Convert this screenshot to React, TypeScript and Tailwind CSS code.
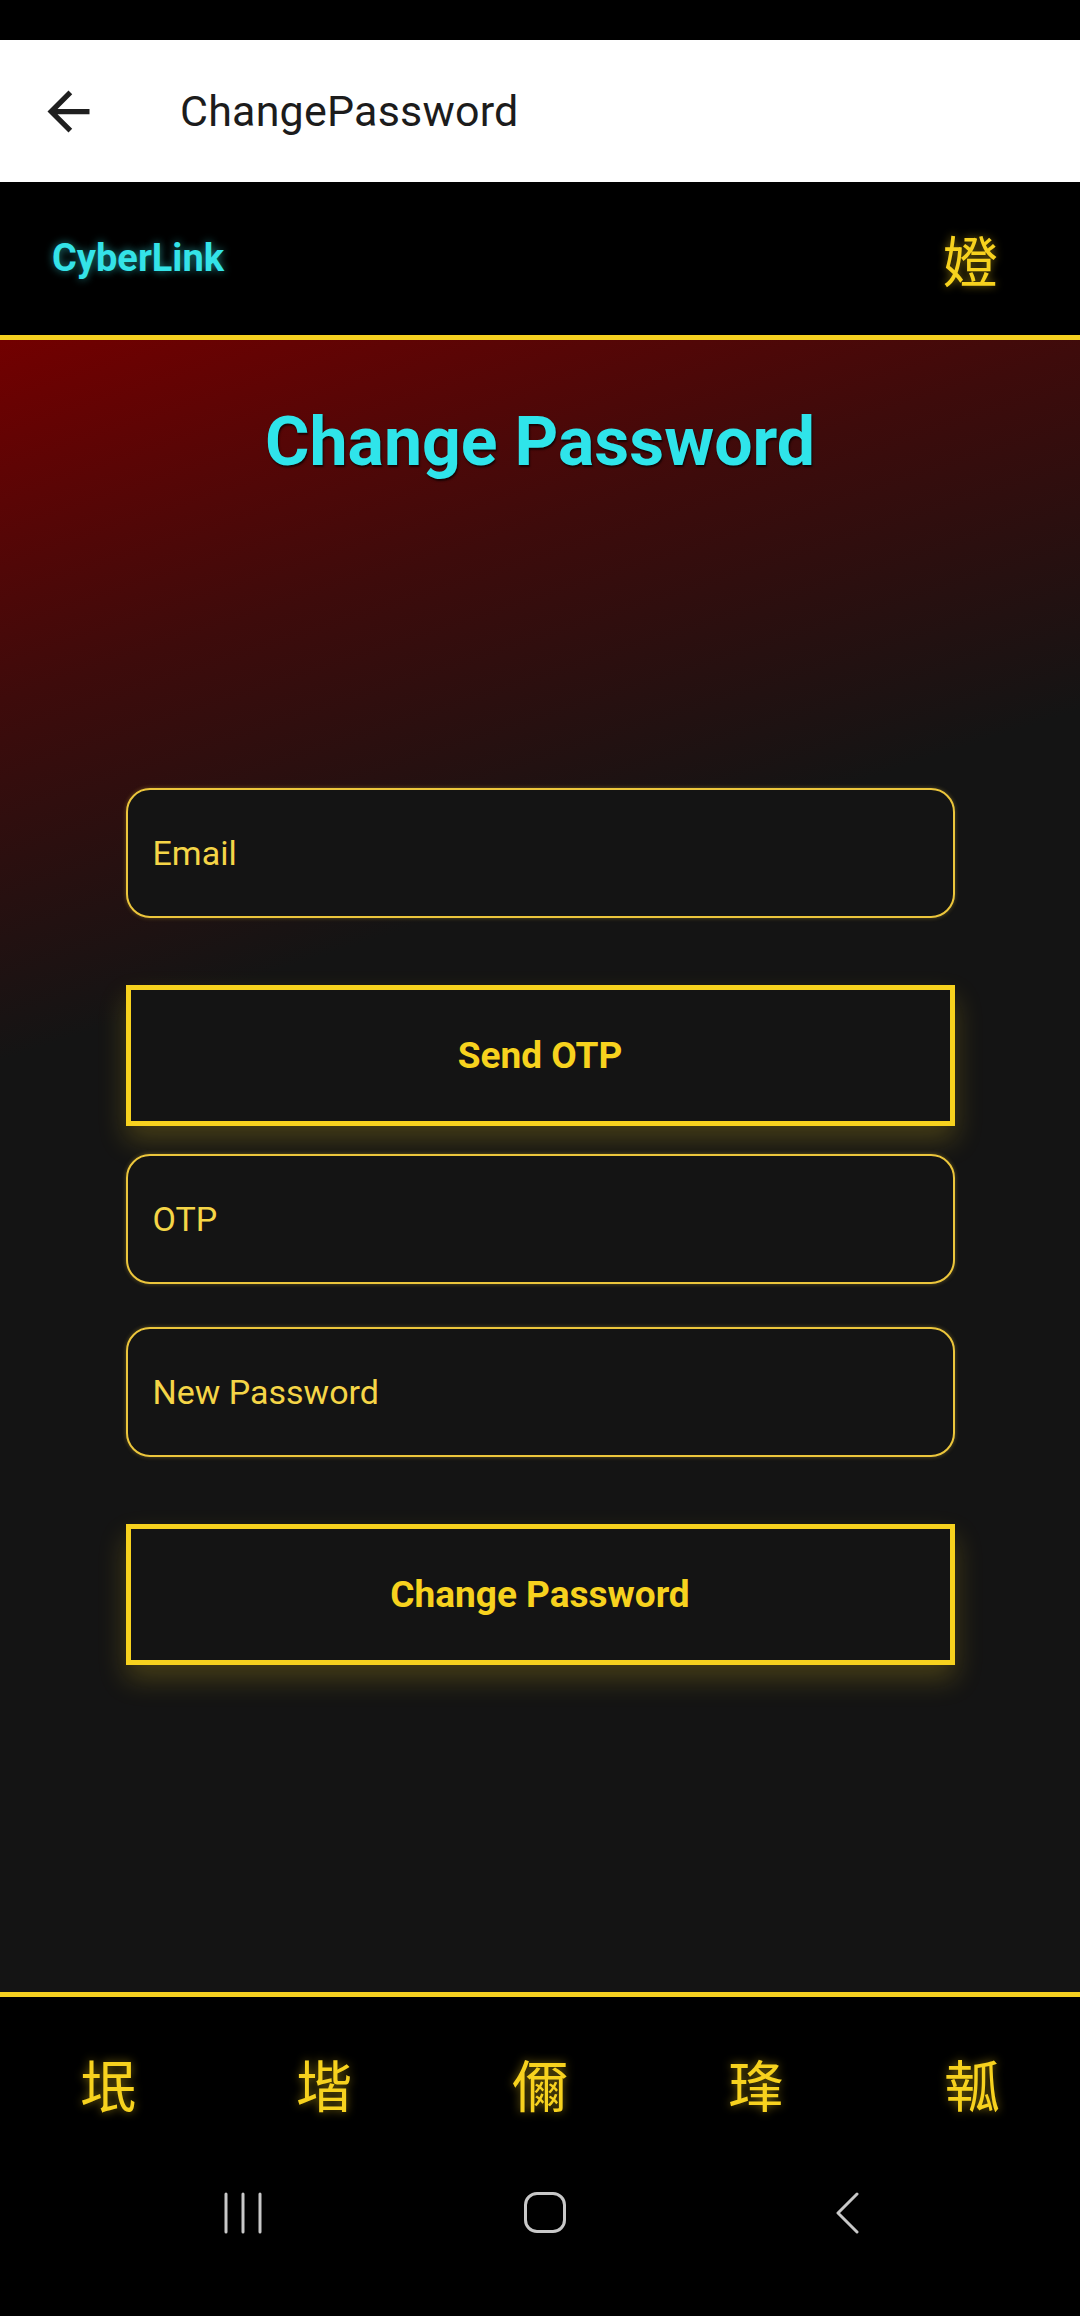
import { useState } from 'react';

const tabs = ['垊', '堦', '儞', '琒', '瓡'];

function Field({ placeholder }: { placeholder: string }) {
  const [value, setValue] = useState('');
  return (
    <input
      value={value}
      onChange={(e) => setValue(e.target.value)}
      placeholder={placeholder}
      className="w-full h-[130px] rounded-[24px] border-2 border-[#ecc63c] bg-[#141414] px-[25px] text-[34px] text-[#f5d547] placeholder:text-[#f5d547] outline-none shadow-[0_0_4px_rgba(236,198,60,0.35)]"
    />
  );
}

function GlowButton({ label }: { label: string }) {
  return (
    <button
      type="button"
      className="w-full h-[141px] border-[5px] border-[#f7d21e] bg-[#141414] text-[37px] font-bold text-[#f7d21e] shadow-[0_14px_26px_rgba(247,210,30,0.22)]"
    >
      {label}
    </button>
  );
}

export default function App() {
  return (
    <div className="w-[1080px] h-[2316px] bg-black flex flex-col font-['Roboto',sans-serif] overflow-hidden">
      {/* status bar */}
      <div className="shrink-0 h-[40px] bg-black" />

      {/* app bar */}
      <div className="shrink-0 relative z-10 h-[142px] bg-white flex items-center shadow-[0_2px_6px_rgba(0,0,0,0.35)]">
        <svg viewBox="0 0 24 24" className="ml-[37px] w-[63px] h-[63px] fill-[#1f1f1f]">
          <path d="M20 11H7.83l5.59-5.59L12 4l-8 8 8 8 1.41-1.41L7.83 13H20v-2z" />
        </svg>
        <span className="ml-[80px] text-[43px] text-[#1c1c1c] tracking-[0.2px]">ChangePassword</span>
      </div>

      {/* brand header */}
      <div className="shrink-0 h-[158px] bg-black border-b-[5px] border-[#f5d020] flex items-center justify-between pl-[52px] pr-[82px]">
        <span className="text-[38px] font-bold text-[#34e3e8] [text-shadow:0_0_8px_rgba(52,227,232,0.55)]">
          CyberLink
        </span>
        <span className="text-[55px] leading-none text-[#f7d21e] font-['Noto_Sans_CJK_SC',sans-serif] [text-shadow:0_0_8px_rgba(247,210,30,0.5)]">
          嬁
        </span>
      </div>

      {/* content */}
      <div className="shrink-0 h-[1652px] flex flex-col items-center bg-[linear-gradient(162deg,#720000_0%,#3e0b0b_18%,#141414_36%,#141414_100%)]">
        <h1 className="mt-[62px] text-[68px] leading-[80px] font-bold text-[#2fe4ea] [text-shadow:1px_2px_2px_rgba(0,0,0,0.7)]">
          Change Password
        </h1>

        <div className="mt-[306px] w-[829px] flex flex-col">
          <Field placeholder="Email" />
          <div className="mt-[67px]">
            <GlowButton label="Send OTP" />
          </div>
          <div className="mt-[28px]">
            <Field placeholder="OTP" />
          </div>
          <div className="mt-[43px]">
            <Field placeholder="New Password" />
          </div>
          <div className="mt-[67px]">
            <GlowButton label="Change Password" />
          </div>
        </div>
      </div>

      {/* bottom tabs */}
      <div className="shrink-0 h-[177px] bg-black border-t-[5px] border-[#f5d020] grid grid-cols-5 items-center">
        {tabs.map((t) => (
          <span
            key={t}
            className="text-center text-[56px] leading-none text-[#f7d21e] font-['Noto_Sans_CJK_SC',sans-serif] [text-shadow:0_0_10px_rgba(247,210,30,0.5)]"
          >
            {t}
          </span>
        ))}
      </div>

      {/* system nav */}
      <div className="shrink-0 h-[147px] bg-black flex justify-center items-start pt-[23px] pl-[10px]">
        <div className="w-[302px] flex justify-center">
          <svg width="40" height="42" viewBox="0 0 40 42" className="stroke-[#c8c8c8]" strokeWidth="3" strokeLinecap="round">
            <line x1="3" y1="2" x2="3" y2="40" />
            <line x1="20" y1="2" x2="20" y2="40" />
            <line x1="37" y1="2" x2="37" y2="40" />
          </svg>
        </div>
        <div className="w-[302px] flex justify-center">
          <div className="w-[42px] h-[41px] rounded-[13px] border-[3px] border-[#c8c8c8]" />
        </div>
        <div className="w-[302px] flex justify-center">
          <svg width="26" height="42" viewBox="0 0 26 42" fill="none" className="stroke-[#c8c8c8]" strokeWidth="3" strokeLinecap="round" strokeLinejoin="round">
            <path d="M23 2 L4 21 L23 40" />
          </svg>
        </div>
      </div>
    </div>
  );
}
